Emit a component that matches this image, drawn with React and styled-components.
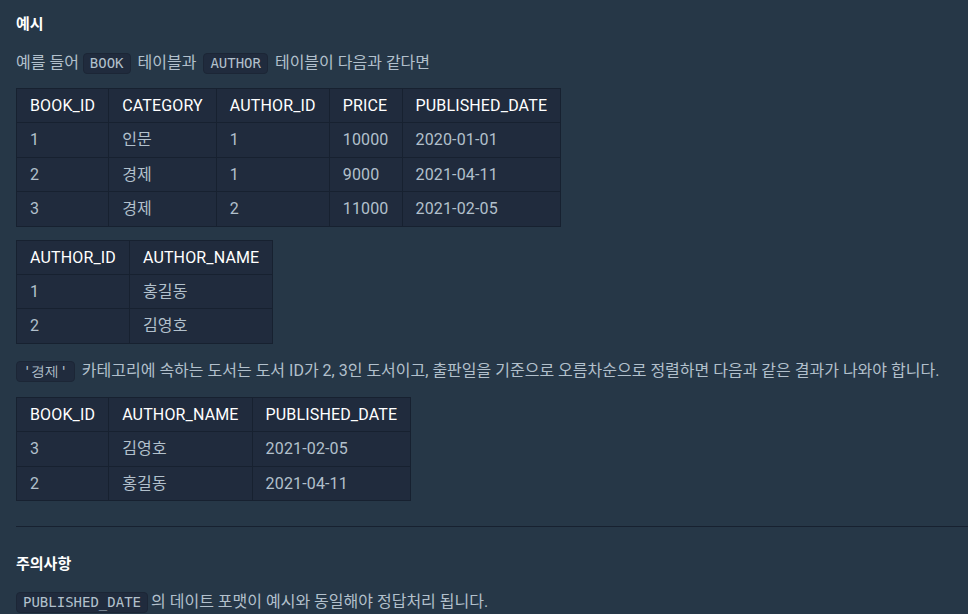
import React from "react";
import styled, { createGlobalStyle } from "styled-components";

const Global = createGlobalStyle`
  html, body {
    margin: 0;
    padding: 0;
    background: #263747;
  }
  body {
    font-family: Roboto, "Noto Sans CJK KR", sans-serif;
  }
`;

const Page = styled.div`
  min-height: 614px;
  padding: 12px 0 0 16px;
  background: #263747;
  color: #b2c0cc;
`;

const Heading = styled.h5`
  margin: ${(p) => p.$mt || 0}px 0 0;
  font-family: Roboto, "Noto Sans CJK KR", sans-serif;
  font-size: 15px;
  font-weight: 700;
  line-height: 24px;
  color: #ffffff;
`;

const Para = styled.p`
  margin: ${(p) => p.$mt || 0}px 0 0;
  font-family: Roboto, "Noto Sans CJK KR", sans-serif;
  font-size: 16px;
  line-height: 24px;
  height: 24px;
  color: #b2c0cc;
  white-space: nowrap;
`;

const Code = styled.code`
  display: inline-block;
  font-family: "DejaVu Sans Mono", monospace;
  font-size: 14px;
  line-height: 17px;
  padding: 1px 6px;
  margin: ${(p) => (p.$tight ? "0 3px 0 0" : "0 3px")};
  border-radius: 4px;
  background: #202b3d;
  border: 1px solid #1c2636;
  color: #b2c0cc;
  &:first-child {
    margin-left: 0;
  }
`;

const Table = styled.table`
  margin-top: ${(p) => p.$mt || 0}px;
  border-collapse: collapse;
  background: #202b3d;
  border: 1px solid #172130;
  font-family: Roboto, "Noto Sans CJK KR", sans-serif;
  font-size: 16px;
  letter-spacing: 0.15px;
`;

const Th = styled.th`
  padding: 7px 13px;
  line-height: 19.4px;
  text-align: left;
  font-weight: 400;
  color: #ffffff;
  border: 1px solid #172130;
`;

const Td = styled.td`
  padding: 7px 13px;
  line-height: 19.4px;
  text-align: left;
  color: #b2c0cc;
  border: 1px solid #172130;
`;

const Divider = styled.hr`
  margin: 25px 0 0;
  border: 0;
  border-top: 1px solid #172130;
`;

function DataTable({ head, rows, mt }) {
  return (
    <Table $mt={mt}>
      <thead>
        <tr>
          {head.map((h) => (
            <Th key={h}>{h}</Th>
          ))}
        </tr>
      </thead>
      <tbody>
        {rows.map((r, i) => (
          <tr key={i}>
            {r.map((c, j) => (
              <Td key={j}>{c}</Td>
            ))}
          </tr>
        ))}
      </tbody>
    </Table>
  );
}

export default function App() {
  return (
    <Page>
      <Global />
      <Heading>예시</Heading>
      <Para $mt={15}>
        예를 들어 <Code>BOOK</Code> 테이블과 <Code>AUTHOR</Code> 테이블이 다음과 같다면
      </Para>
      <DataTable
        mt={13}
        head={["BOOK_ID", "CATEGORY", "AUTHOR_ID", "PRICE", "PUBLISHED_DATE"]}
        rows={[
          ["1", "인문", "1", "10000", "2020-01-01"],
          ["2", "경제", "1", "9000", "2021-04-11"],
          ["3", "경제", "2", "11000", "2021-02-05"],
        ]}
      />
      <DataTable
        mt={13}
        head={["AUTHOR_ID", "AUTHOR_NAME"]}
        rows={[
          ["1", "홍길동"],
          ["2", "김영호"],
        ]}
      />
      <Para $mt={15}>
        <Code>'경제'</Code> 카테고리에 속하는 도서는 도서 ID가 2, 3인 도서이고, 출판일을 기준으로
        오름차순으로 정렬하면 다음과 같은 결과가 나와야 합니다.
      </Para>
      <DataTable
        mt={14}
        head={["BOOK_ID", "AUTHOR_NAME", "PUBLISHED_DATE"]}
        rows={[
          ["3", "김영호", "2021-02-05"],
          ["2", "홍길동", "2021-04-11"],
        ]}
      />
      <Divider />
      <Heading $mt={25}>주의사항</Heading>
      <Para $mt={14}>
        <Code $tight>PUBLISHED_DATE</Code>의 데이트 포맷이 예시와 동일해야 정답처리 됩니다.
      </Para>
    </Page>
  );
}
